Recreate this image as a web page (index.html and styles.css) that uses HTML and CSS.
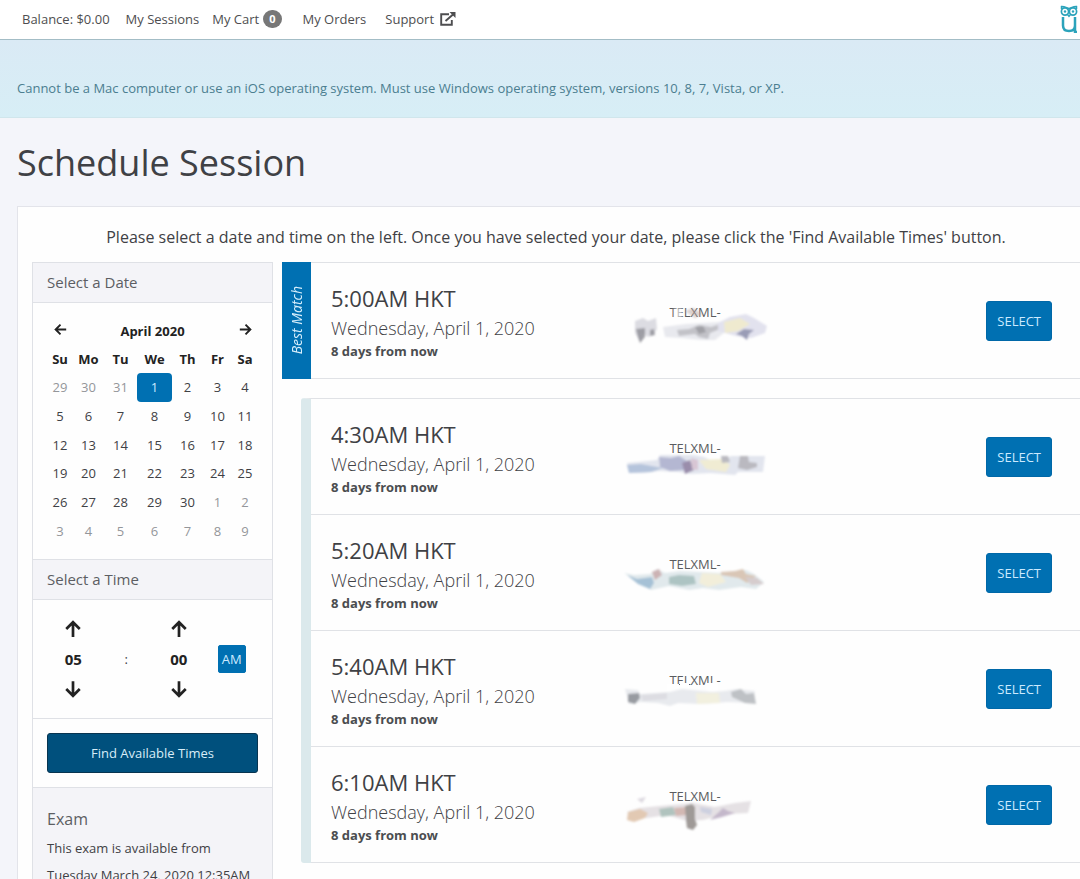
FILE: index.html
```html
<!DOCTYPE html>
<html lang="en">
<head>
<meta charset="utf-8">
<meta name="viewport" content="width=device-width, initial-scale=1">
<title>Schedule Session</title>
<link rel="stylesheet" href="styles.css">
</head>
<body>
<svg class="defs" aria-hidden="true">
  <defs>
    <filter id="soft" x="-10%" y="-30%" width="120%" height="160%"><feGaussianBlur stdDeviation="1.1"/></filter>
    <symbol id="arrow" viewBox="0 0 16 16">
      <path d="M8 15V2M2 8l6-6 6 6" fill="none" stroke="currentColor" stroke-width="2.4"/>
    </symbol>
  </defs>
</svg>
<header class="topbar">
  <nav class="nav">
    <span class="balance">Balance: $0.00</span>
    <a class="sessions" href="#">My Sessions</a>
    <a class="cart" href="#">My Cart <span class="count">0</span></a>
    <a class="orders" href="#">My Orders</a>
    <a class="support" href="#">Support
      <svg class="external" viewBox="0 0 16 14" aria-hidden="true"><path d="M9 2.200H1.200V12.800H11.800V8M5.500 9L13 2.500" fill="none" stroke="currentColor" stroke-width="1.900"/><path d="M9.500 0H15.500V6z" fill="currentColor"/></svg>
    </a>
  </nav>
  <svg class="logo" viewBox="0 0 18 28" role="img" aria-label="Home"><g fill="none" stroke="#2ba3bb"><path d="M1 1.500C4 1 6 2.500 9 3.500 12 2.500 14 1 17 1.500M1.500 1v3M16.500 1v3" stroke-width="1.500"/><circle cx="5" cy="6.500" r="3.600" stroke-width="1.700"/><circle cx="13" cy="6.500" r="3.600" stroke-width="1.700"/><path d="M7.500 9.500L9 11.500l1.500-2" stroke-width="1.300"/><path d="M3 12v8.500q0 5.500 6 5.500t6-5.500V12M15 20v7h2" stroke-width="2.500"/></g><circle cx="5" cy="6.500" r="1.200" fill="#2ba3bb"/><circle cx="13" cy="6.500" r="1.200" fill="#2ba3bb"/></svg>
</header>
<div class="notice">Cannot be a Mac computer or use an iOS operating system. Must use Windows operating system, versions 10, 8, 7, Vista, or XP.</div>
<main class="page">
  <h1>Schedule Session</h1>
  <section class="panel">
    <p class="intro">Please select a date and time on the left. Once you have selected your date, please click the 'Find Available Times' button.</p>
    <div class="columns">
      <aside class="sidebar">
        <h2>Select a Date</h2>
        <div class="box">
          <table class="calendar">
            <colgroup><col class="w26"><col class="w31"><col class="w33"><col class="w35"><col class="w31"><col class="w29"><col class="w26"></colgroup>
            <thead>
              <tr><th><button class="icon" aria-label="Previous month"><svg class="left"><use href="#arrow"/></svg></button></th><th colspan="5">April 2020</th><th><button class="icon" aria-label="Next month"><svg class="right"><use href="#arrow"/></svg></button></th></tr>
              <tr><th>Su</th><th>Mo</th><th>Tu</th><th>We</th><th>Th</th><th>Fr</th><th>Sa</th></tr>
            </thead>
            <tbody>
              <tr><td class="off">29</td><td class="off">30</td><td class="off">31</td><td class="on">1</td><td>2</td><td>3</td><td>4</td></tr>
              <tr><td>5</td><td>6</td><td>7</td><td>8</td><td>9</td><td>10</td><td>11</td></tr>
              <tr><td>12</td><td>13</td><td>14</td><td>15</td><td>16</td><td>17</td><td>18</td></tr>
              <tr><td>19</td><td>20</td><td>21</td><td>22</td><td>23</td><td>24</td><td>25</td></tr>
              <tr><td>26</td><td>27</td><td>28</td><td>29</td><td>30</td><td class="off">1</td><td class="off">2</td></tr>
              <tr><td class="off">3</td><td class="off">4</td><td class="off">5</td><td class="off">6</td><td class="off">7</td><td class="off">8</td><td class="off">9</td></tr>
            </tbody>
          </table>
        </div>
        <h2>Select a Time</h2>
        <div class="box time">
          <button class="icon" aria-label="Hour up"><svg><use href="#arrow"/></svg></button><span></span><button class="icon" aria-label="Minute up"><svg><use href="#arrow"/></svg></button><span></span>
          <b>05</b><span>:</span><b>00</b><button class="ampm">AM</button>
          <button class="icon" aria-label="Hour down"><svg class="down"><use href="#arrow"/></svg></button><span></span><button class="icon" aria-label="Minute down"><svg class="down"><use href="#arrow"/></svg></button><span></span>
        </div>
        <div class="box find"><button>Find Available Times</button></div>
        <div class="exam">
          <h3>Exam</h3>
          <p>This exam is available from</p>
          <p>Tuesday March 24, 2020 12:35AM</p>
        </div>
      </aside>
      <div class="results">
        <div class="best">
          <div class="ribbon"><em>Best Match</em></div>
          <article class="slot">
            <div><h4>5:00AM HKT</h4><p class="day">Wednesday, April 1, 2020</p><p class="away">8 days from now</p></div>
            <div class="code">TELXML-
              <svg class="smear" viewBox="0 0 150 48" aria-hidden="true"><g filter="url(#soft)"><path d="M51 5h8v10h-8z" fill="#fff" opacity=".6"/><path d="M62 8l8-3 10 6-8 4z" fill="#b9a6a0" opacity=".5"/><path d="M12 18l8-3 5 3 8-3 1 11-4 6-5 2-5-3-2 9-6-10z" fill="#dcdce2"/><path d="M13 26l9-1v9l-5 6-2-6zM27 27l4-1 1 6-5 1z" fill="#8d8d95" opacity=".8"/><path d="M40 24l23-3 34-2 12 3-7 7-10 8H78l-20-2-16-1z" fill="#e8e9ee"/><path d="M54 27l12-1 10-4 12 2 9-3v5l-10 4-2 6-9-2-4-3-16 2z" fill="#c2c2c8"/><path d="M72 24l8-1 3 6-7 2z" fill="#a0a0a6"/><path d="M95 20l12-6 16-3 8 4 13 8-2 7-14 5-15-2-18-5z" fill="#e2e2ee"/><path d="M101 19l16-4 10 6-12 7-13 2z" fill="#efeacf"/><path d="M113 31l8-5 10 1-5 4-2 6-5-4z" fill="#9a9cb6"/></g></svg>
            </div>
            <button class="select">SELECT</button>
          </article>
        </div>
        <div class="list">
          <article class="slot">
            <div><h4>4:30AM HKT</h4><p class="day">Wednesday, April 1, 2020</p><p class="away">8 days from now</p></div>
            <div class="code">TELXML-
              <svg class="smear" viewBox="0 0 150 48" aria-hidden="true"><g filter="url(#soft)"><path d="M4 24l30-3 3-5h34l10 2 8 4h11l8-5h34l-2 16h-25l-3 3-24-2-20 1-12-2-20-1-16 2H6z" fill="#e2e5ee"/><path d="M4 26l14-1 16 3 6 1-12 4-22 1z" fill="#b5c4dc"/><path d="M36 18l12 1 8-2 8 5-3 9-14 1-10-4z" fill="#b4b7d2"/><path d="M59 24l8-3 4 10-9 4z" fill="#9a8dab"/><path d="M68 19l7 2v10l-6-1z" fill="#d8c6d4"/><path d="M76 21l24-1 7 6-4 7-20-3z" fill="#f0ecd3"/><path d="M98 17h7l2 6-8 1zM117 17h8l1 6 8 1v4l-10 3-9-2z" fill="#bab9c0"/></g></svg>
            </div>
            <button class="select">SELECT</button>
          </article>
          <article class="slot">
            <div><h4>5:20AM HKT</h4><p class="day">Wednesday, April 1, 2020</p><p class="away">8 days from now</p></div>
            <div class="code">TELXML-
              <svg class="smear" viewBox="0 0 150 48" aria-hidden="true"><path d="M44 15h10v5H44zM58 15h7v5h-7zM83 15h12v5H83z" fill="#fff"/><g filter="url(#soft)"><path d="M1 18l10 2 16-1 7-5 8 4 15-2 42 2 24-3 8 4 10 8-8 7-15-2-22 3-16-2-14 2-20-4-18 4-14-8z" fill="#e1e9ec"/><path d="M4 20l10 4 15-2 2 6-4 6-12-5z" fill="#a6c1d6"/><path d="M29 17l7-3 3 6-7 5z" fill="#ccb2b4"/><path d="M46 22l10-2 15 1 2 8-14 2-13-2z" fill="#adc4c3"/><path d="M79 18l18 1 6 8-18 5-9-4z" fill="#f2eeda"/><path d="M98 17l14-1 8-2 3 5 10 2-9 7-8-5-18-3z" fill="#d9c6b6"/><path d="M122 22l12 1 7 6-13 1z" fill="#d6cccd"/></g></svg>
            </div>
            <button class="select">SELECT</button>
          </article>
          <article class="slot">
            <div><h4>5:40AM HKT</h4><p class="day">Wednesday, April 1, 2020</p><p class="away">8 days from now</p></div>
            <div class="code">TELXML-
              <svg class="smear" viewBox="0 0 150 48" aria-hidden="true"><path d="M44 13h12v7H44zM57 12h9v8h-9zM83 12h12v8H83z" fill="#fff"/><g filter="url(#soft)"><path d="M2 18l13 1 2 4 30-2 12-3 30 3 13-1 12-2 18 2-3 12-24-1-28 2-22-1-8 3-12-3-17-1-12 2z" fill="#e8eaee"/><path d="M5 23l11-1 1 5-5 6-7-2z" fill="#989ba1"/><path d="M18 24l26-2v6l-24 2z" fill="#dddde2"/><path d="M73 22h23l1 10-23 1z" fill="#f2f0df"/><path d="M108 21l10-3 5 5 8-1 2 11-11-1-13-6z" fill="#bec1c5"/></g></svg>
            </div>
            <button class="select">SELECT</button>
          </article>
          <article class="slot">
            <div><h4>6:10AM HKT</h4><p class="day">Wednesday, April 1, 2020</p><p class="away">8 days from now</p></div>
            <div class="code">TELXML-
              <svg class="smear" viewBox="0 0 150 48" aria-hidden="true"><g filter="url(#soft)"><path d="M14 12l9-2-4 6z" fill="#ddd9e0"/><path d="M4 25l12-4 20-2 34-3 22 4 20-4 16-2-3 12-22 1-23 6-16 1-20-6-20 3-15-1z" fill="#e5e1e4"/><path d="M5 25l12-3 8 4-3 5-11 4-7-2z" fill="#e2c9b3"/><path d="M36 22l14-2 3 8-15 2z" fill="#b0c3be"/><path d="M51 21l13-1v8l-11 1z" fill="#d2b8b3"/><path d="M62 19l7-2 3 3v12l2 6-4 5-6-2-1-8z" fill="#9f9a97"/><path d="M77 20l12 2-1 6-10-3z" fill="#cdd0e0"/><path d="M96 25l4-4 5 3 7 2-13 4-12 3z" fill="#c4b8cb"/></g></svg>
            </div>
            <button class="select">SELECT</button>
          </article>
        </div>
      </div>
    </div>
  </section>
</main>
</body>
</html>
```
FILE: styles.css
```css
* { box-sizing: border-box; }
body {
  margin: 0;
  background: #f4f5fa;
  color: #3f4145;
  font: 13px/20px "Open Sans", "Noto Sans", sans-serif;
}
h1, h2, h3, h4, p { margin: 0; font-weight: 400; }
button { font: inherit; cursor: pointer; }
.defs { position: absolute; width: 0; height: 0; }

.topbar {
  display: flex;
  align-items: center;
  justify-content: space-between;
  height: 40px;
  padding: 0 2px 2px 22px;
  background: #fff;
  border-bottom: 1px solid #a3bdc6;
}
.nav { display: flex; align-items: center; color: #4e4e50; }
.nav a { color: inherit; text-decoration: none; }
.balance { margin-right: 16px; }
.sessions { margin-right: 13px; }
.cart { margin-right: 21px; }
.orders { margin-right: 19px; }
.cart, .support { display: flex; align-items: center; }
.count {
  margin-left: 4px;
  padding: 0 6px;
  border-radius: 9px;
  background: #777;
  color: #fff;
  font-size: 11px;
  line-height: 18px;
  font-weight: 700;
}
.external { width: 16px; height: 14px; margin-left: 6px; }
.logo { width: 18px; height: 28px; }

.notice {
  padding: 38px 17px 19px;
  background: linear-gradient(#daeaf5, #d7eef6);
  border-bottom: 1px solid #d0e6ec;
  color: #4b7e90;
}

.page { padding-left: 17px; }
h1 { padding: 20px 0 18px; font-size: 36px; line-height: 50px; }
.panel {
  padding: 18px 0 15px 14px;
  background: #fefefe;
  border: solid #e3e4ea;
  border-width: 1px 0 1px 1px;
}
.intro { padding: 0 0 13px; font-size: 16px; line-height: 24px; text-align: center; }
.columns { display: flex; align-items: flex-start; gap: 9px; }

.sidebar { flex: none; width: 241px; border: 1px solid #dfe1e6; }
.sidebar h2 {
  padding: 0 14px;
  background: #f4f4f8;
  border-bottom: 1px solid #dfe1e6;
  color: #5c5e63;
  font-size: 15px;
  line-height: 39px;
}
.box { padding: 14px; border-bottom: 1px solid #dfe1e6; }
.calendar {
  width: 100%;
  height: 228px;
  table-layout: fixed;
  border-collapse: collapse;
  text-align: center;
}
.calendar tr { height: 28px; }
.calendar th, .calendar td { padding: 0; }
.calendar th { color: #222; font-weight: 700; }
.calendar .off { color: #94969a; }
.calendar .on { background: #0070b2; border-radius: 4px; color: #cdeaff; }
.w26 { width: 26px; }
.w29 { width: 29px; }
.w31 { width: 31px; }
.w33 { width: 33px; }
.w35 { width: 35px; }
.icon { padding: 0; border: 0; background: none; color: #222; line-height: 0; }
.icon svg { width: 13px; height: 13px; }
.left { transform: rotate(-90deg); }
.right { transform: rotate(90deg); }
.down { transform: rotate(180deg); }
.time {
  display: grid;
  grid-template-columns: repeat(4, 1fr);
  grid-auto-rows: 30px;
  place-items: center;
}
.time .icon svg { width: 18px; height: 18px; }
.time b { color: #222; font-size: 15px; }
.ampm { padding: 3px; border: 1px solid #0070b2; border-radius: 2px; background: #0070b2; color: #cdeaff; }
.find button {
  width: 100%;
  padding: 9px;
  border: 1px solid #083450;
  border-radius: 3px;
  background: #00507d;
  color: #d8edf8;
}
.exam { padding: 19px 14px; background: #f4f4f8; }
.exam h3 { margin-bottom: 4px; color: #5c5e63; font-size: 16px; line-height: 24px; }
.exam p { line-height: 27px; white-space: nowrap; }

.results { flex: 1; min-width: 0; }
.best { display: flex; }
.ribbon {
  display: flex;
  align-items: center;
  justify-content: center;
  flex: none;
  width: 29px;
  background: #0070b2;
  color: #d8effc;
  font-size: 14px;
}
.ribbon em { writing-mode: vertical-rl; transform: rotate(180deg); }
.best .slot { flex: 1; border-top: 1px solid #e0e2e6; height: 117px; }
.list { margin: 19px 0 0 19px; border-top: 1px solid #e0e2e6; border-left: 10px solid #dbe9ec; border-radius: 3px 0 0 3px; }
.slot {
  display: grid;
  grid-template-columns: 41fr 19fr 40fr;
  align-items: center;
  height: 116px;
  padding: 0 28px 0 20px;
  border-bottom: 1px solid #e0e2e6;
}
.slot h4 { font-size: 22px; line-height: 34px; }
.slot > div { white-space: nowrap; }
.day { font-size: 18px; font-weight: 300; line-height: 26px; }
.away { color: #4b4d50; font-size: 13px; font-weight: 700; line-height: 20px; }
.code { position: relative; align-self: start; padding-top: 39px; color: #5a5c60; text-align: center; }
.smear { position: absolute; top: 40px; left: 50%; width: 150px; height: 48px; margin-left: -72px; }
.select {
  justify-self: end;
  padding: 9px 10px;
  border: 1px solid #0068a8;
  border-radius: 3px;
  background: #0070b2;
  color: #cdeaff;
}
```
